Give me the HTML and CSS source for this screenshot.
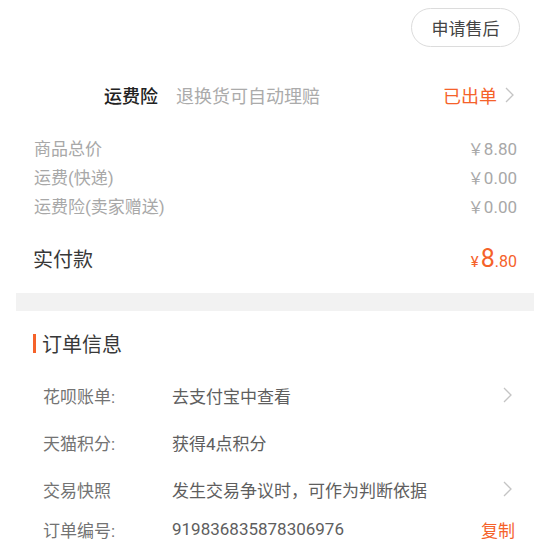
FILE: index.html
```html
<!DOCTYPE html>
<html lang="zh-CN">
<head>
<meta charset="utf-8">
<title>订单详情</title>
<link rel="stylesheet" href="styles.css">
</head>
<body>
<div class="page">
  <div class="top">
    <div class="btn">申请售后</div>
  </div>

  <div class="insure">
    <div class="insure-left">
      <span class="insure-name">运费险</span>
      <span class="insure-desc">退换货可自动理赔</span>
    </div>
    <div class="insure-right">
      <span class="orange">已出单</span>
      <svg class="chev" width="9" height="16" viewBox="0 0 9 16"><polyline points="1,1 8,8 1,15" fill="none" stroke="#c4c4c4" stroke-width="1.3"/></svg>
    </div>
  </div>

  <div class="prices">
    <div class="price-row"><span>商品总价</span><span class="num"><span class="fy">￥</span>8.80</span></div>
    <div class="price-row"><span>运费(快递)</span><span class="num"><span class="fy">￥</span>0.00</span></div>
    <div class="price-row"><span>运费险(卖家赠送)</span><span class="num"><span class="fy">￥</span>0.00</span></div>
  </div>

  <div class="total">
    <span>实付款</span>
    <span class="total-num"><span class="yen">¥</span><span class="big">8</span><span class="small">.80</span></span>
  </div>

  <div class="divider"></div>

  <div class="title"><span class="title-bar"></span>订单信息</div>

  <div class="info">
    <div class="row">
      <span class="label">花呗账单:</span>
      <span class="value">去支付宝中查看</span>
      <svg class="chev" width="9" height="16" viewBox="0 0 9 16"><polyline points="1,1 8,8 1,15" fill="none" stroke="#c4c4c4" stroke-width="1.3"/></svg>
    </div>
    <div class="row">
      <span class="label">天猫积分:</span>
      <span class="value">获得4点积分</span>
    </div>
    <div class="row">
      <span class="label">交易快照</span>
      <span class="value">发生交易争议时，可作为判断依据</span>
      <svg class="chev" width="9" height="16" viewBox="0 0 9 16"><polyline points="1,1 8,8 1,15" fill="none" stroke="#c4c4c4" stroke-width="1.3"/></svg>
    </div>
    <div class="row row-last">
      <span class="label">订单编号:</span>
      <span class="value num">919836835878306976</span>
      <span class="copy">复制</span>
    </div>
  </div>
</div>
</body>
</html>
```
FILE: styles.css
```css
html, body {
  margin: 0;
  padding: 0;
  background: #ffffff;
}
body {
  font-family: Roboto, "Noto Sans CJK SC", "Noto Sans", sans-serif;
  color: #333;
}
.page {
  width: 550px;
}
.top {
  display: flex;
  justify-content: flex-end;
  padding: 8px 30px 0 0;
}
.btn {
  box-sizing: border-box;
  width: 109px;
  height: 39px;
  border: 1px solid #dcdcdc;
  border-radius: 20px;
  display: flex;
  align-items: center;
  justify-content: center;
  font-size: 17px;
  color: #444;
}
.insure {
  margin-top: 28px;
  height: 40px;
  display: flex;
  align-items: center;
  justify-content: space-between;
  padding: 0 36px 0 104px;
}
.insure-left {
  display: flex;
  align-items: center;
  gap: 18px;
}
.insure-name {
  font-size: 18px;
  color: #222;
  font-weight: 500;
}
.insure-desc {
  font-size: 18px;
  color: #ababab;
}
.insure-right {
  display: flex;
  align-items: center;
  gap: 8px;
  font-size: 18px;
}
.orange {
  color: #f5622a;
}
.chev {
  display: block;
  flex: none;
}
.prices {
  margin-top: 18px;
  padding: 0 33px 0 34px;
}
.price-row {
  height: 29px;
  display: flex;
  align-items: center;
  justify-content: space-between;
  font-size: 17px;
  color: #a8a8a8;
}
.fy {
  font-family: "Noto Sans CJK SC", sans-serif;
  font-size: 16px;
}
.num {
  font-family: Roboto, "Noto Sans CJK SC", sans-serif;
}
.total {
  margin-top: 21px;
  height: 34px;
  display: flex;
  align-items: center;
  justify-content: space-between;
  padding: 0 33px 0 33px;
  font-size: 20px;
  color: #383838;
}
.total-num {
  color: #f5622a;
  font-family: Roboto, sans-serif;
  display: flex;
  align-items: baseline;
}
.yen {
  font-size: 15px;
  margin-right: 2px;
}
.big {
  font-size: 25px;
}
.small {
  font-size: 16px;
}
.divider {
  margin: 18px 16px 0 16px;
  height: 18px;
  background: #f2f2f2;
}
.title {
  margin-top: 17px;
  height: 30px;
  display: flex;
  align-items: center;
  padding-left: 33px;
  font-size: 20px;
  color: #383838;
}
.title-bar {
  width: 3px;
  height: 19px;
  background: #f5622a;
  margin-right: 6px;
}
.info {
  margin-top: 17px;
  padding: 0 35px 0 43px;
  display: flex;
  flex-direction: column;
  gap: 7px;
}
.row {
  height: 40px;
  display: flex;
  align-items: center;
  font-size: 17px;
}
.row-last {
  margin-top: -7px;
}
.label {
  width: 129px;
  flex: none;
  color: #737373;
}
.value {
  flex: 1;
  color: #5e5e5e;
}
.row .chev {
  margin-right: 3px;
}
.copy {
  color: #f5622a;
}
```
